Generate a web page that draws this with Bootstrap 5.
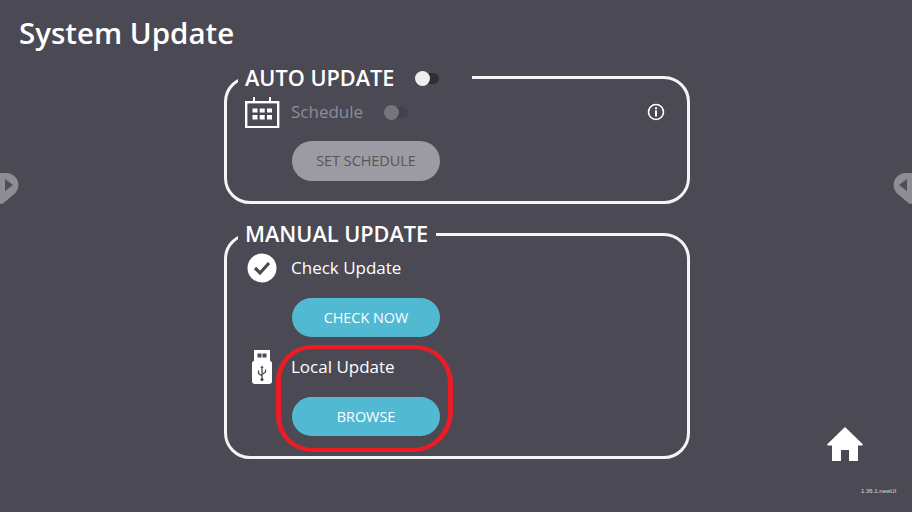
<!DOCTYPE html>
<html lang="en">
<head>
    <meta charset="UTF-8">
    <meta name="viewport" content="width=device-width, initial-scale=1.0">
    <title>System Update</title>
    <link href="https://cdn.jsdelivr.net/npm/bootstrap@5.3.3/dist/css/bootstrap.min.css" rel="stylesheet">
    <style>
        body {
            background: #4b4954;
            color: #fff;
            font-family: "Open Sans", "Liberation Sans", sans-serif;
            height: 512px;
            overflow: hidden;
        }
        .page-title { font-size: 29.5px; font-weight: 600; line-height: 38px; margin: 0; padding: 14px 0 0 19px; height: 76px; }
        .panels { width: 466px; margin-left: 224px; gap: 29px; }
        .panel-box { position: relative; border: 3px solid #f4f4f5; border-radius: 26px; padding-left: 16px; }
        .panel-auto { height: 128px; padding-top: 15px; }
        .panel-manual { height: 226px; padding-top: 14px; }
        .panel-title {
            position: absolute; top: -17px; left: 11px; height: 30px; padding: 0 8px 0 7px;
            background: #4b4954; font-size: 21.7px; font-weight: 600; line-height: 30px; white-space: nowrap;
        }
        .panel-auto .panel-title { top: -16px; padding-right: 33px; }
        .toggle-sw { position: relative; display: inline-block; width: 24px; height: 15px; margin-left: 21px; }
        .toggle-sw::before { content: ""; position: absolute; right: 0; top: 2px; width: 16px; height: 11px; border-radius: 6px; background: #2f2e36; }
        .toggle-sw::after { content: ""; position: absolute; left: 0; top: 0; width: 15px; height: 15px; border-radius: 50%; background: #eeeeee; }
        .toggle-off::before { background: #43414b; }
        .toggle-off::after { background: #76747d; }
        .icon-col { width: 38px; flex: none; }
        .row-label { font-size: 17px; line-height: 36px; height: 36px; margin-left: 10px; }
        .label-muted { color: #8f8d95; }
        .pill-btn {
            width: 148px; height: 39px; padding: 0; border: 0; border-radius: 20px; margin-left: 49px;
            background: #52b9d3; color: #fff; font-size: 14.4px; line-height: 39px; text-align: center; display: block;
        }
        .pill-btn:disabled { height: 40px; line-height: 40px; background: #9c9aa2; color: #56545d; opacity: 1; }
        .pill-gap { margin-top: 12px; }
        .panel-auto .pill-gap { margin-top: 11px; }
        .row-gap { margin-top: 12px; }
        .info-mark { margin-right: 22px; }
        .red-mark {
            position: absolute; left: 276px; top: 345px; width: 177px; height: 107px;
            border-style: solid; border-color: #ed1c24; border-width: 4px 5px; border-radius: 36px 38px 40px 36px; pointer-events: none;
        }
        .side-tab { position: absolute; top: 172px; }
        .side-left { left: 0; }
        .side-right { right: 0; }
        .home-btn { position: absolute; left: 827px; top: 427px; }
        .version-txt { position: absolute; left: 861px; top: 487px; font-size: 6px; line-height: 8px; color: #dddddd; font-family: "Liberation Sans", sans-serif; }
    </style>
</head>
<body>
    <h1 class="page-title">System Update</h1>

    <div class="panels d-flex flex-column">
        <div class="panel-box panel-auto">
            <div class="panel-title d-flex align-items-center">
                <span>AUTO UPDATE</span>
                <span class="toggle-sw"></span>
            </div>
            <div class="d-flex align-items-center">
                <div class="icon-col d-flex justify-content-center">
                    <svg width="36" height="32" viewBox="0 -1 36 32" fill="none">
                        <rect x="2.2" y="5.2" width="32" height="25" stroke="#fff" stroke-width="2.4"/>
                        <path d="M10 0v6M26 0v6" stroke="#fff" stroke-width="2"/>
                        <path d="M8.500 11.500h5v4h-5zM15.700 11.500h5v4h-5zM23 11.500h5v4h-5zM8.500 18h5v4.500h-5zM15.700 18h5v4.500h-5zM23 18h5v4.500h-5z" fill="#fff"/>
                    </svg>
                </div>
                <span class="row-label label-muted">Schedule</span>
                <span class="toggle-sw toggle-off"></span>
                <svg class="ms-auto info-mark" width="18" height="18" viewBox="0 0 18 18" fill="none">
                    <circle cx="9" cy="9" r="7.5" stroke="#fff" stroke-width="1.600"/>
                    <rect x="8" y="7.500" width="2" height="6" fill="#fff"/>
                    <rect x="8" y="4.300" width="2" height="2" fill="#fff"/>
                </svg>
            </div>
            <button class="pill-btn pill-gap" disabled>SET SCHEDULE</button>
        </div>

        <div class="panel-box panel-manual">
            <div class="panel-title">MANUAL UPDATE</div>
            <div class="d-flex align-items-center">
                <div class="icon-col d-flex justify-content-center">
                    <svg width="30" height="30" viewBox="0 0 30 30">
                        <circle cx="15" cy="15" r="14.500" fill="#fff"/>
                        <path d="M8 15l5 5 9-10" fill="none" stroke="#4b4954" stroke-width="3.200"/>
                    </svg>
                </div>
                <span class="row-label">Check Update</span>
            </div>
            <button class="pill-btn pill-gap">CHECK NOW</button>
            <div class="d-flex align-items-center row-gap">
                <div class="icon-col d-flex justify-content-center">
                    <svg width="20" height="34" viewBox="0 0 20 34">
                        <path d="M3 1h14v11H3z" fill="#fff" stroke="#fff" stroke-width="2"/>
                        <path d="M5.500 3.500h4v4h-4zM10.500 3.500h4v4h-4z" fill="#4b4954"/>
                        <path d="M2 11h16a2 2 0 0 1 2 2v18a3 3 0 0 1-3 3H3a3 3 0 0 1-3-3V13a2 2 0 0 1 2-2z" fill="#fff"/>
                        <path d="M10 17v13M6.500 20.500v3l3.500 2.500M13.500 19.500v2.500l-3.500 2.500" fill="none" stroke="#4b4954" stroke-width="1.300"/>
                        <circle cx="10" cy="29.500" r="1.600" fill="#4b4954"/>
                        <path d="M10 15.500l1.700 2.500H8.300z" fill="#4b4954"/>
                    </svg>
                </div>
                <span class="row-label">Local Update</span>
            </div>
            <button class="pill-btn pill-gap">BROWSE</button>
        </div>
    </div>

    <div class="red-mark"></div>

    <svg class="side-tab side-left" width="20" height="33" viewBox="0 0 20 33">
        <path d="M0 1h7a12 12 0 0 1 6 22L3 31.500 0 32z" fill="#8e8c94"/>
        <path d="M5 7l8 6-8 6z" fill="#4f4d57"/>
    </svg>
    <svg class="side-tab side-right" width="20" height="33" viewBox="0 0 20 33">
        <path d="M20 1h-7a12 12 0 0 0-6 22l10 8.500 3 .5z" fill="#8e8c94"/>
        <path d="M15 7l-8 6 8 6z" fill="#4f4d57"/>
    </svg>

    <svg class="home-btn" width="36" height="35" viewBox="0 0 36 35">
        <path d="M18 0L36 17.500l-1 1H31V34H22V23H14V34H5V18.500H1l-1-1z" fill="#fff"/>
    </svg>
    <div class="version-txt">1.36.1.newUI</div>

    <script src="https://cdn.jsdelivr.net/npm/bootstrap@5.3.3/dist/js/bootstrap.bundle.min.js"></script>
</body>
</html>
